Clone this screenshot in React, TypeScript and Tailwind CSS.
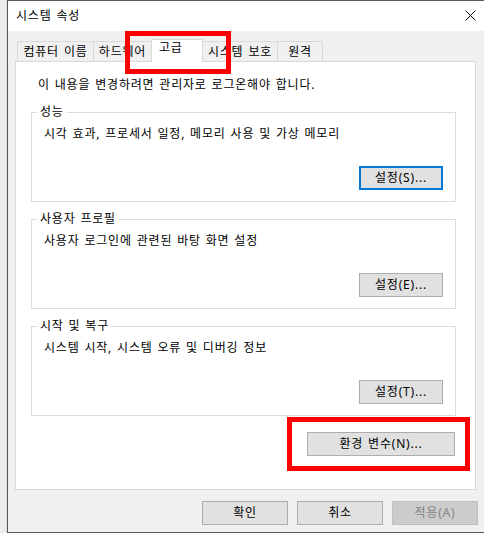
import React from 'react'

const font = "font-['Noto_Sans','Noto_Sans_CJK_KR',sans-serif] tracking-[0.8px] [word-spacing:1px]"

function Btn({ label, width = 'w-[84px]', focused = false, disabled = false }: { label: string; width?: string; focused?: boolean; disabled?: boolean }) {
  let cls = 'bg-[#e1e1e1] border border-[#adadad] text-black'
  if (focused) cls = 'bg-[#e1e1e1] border-2 border-[#0078d7] text-black'
  if (disabled) cls = 'bg-[#cccccc] border border-[#bfbfbf] text-[#838383]'
  return (
    <div className={`${width} h-[24px] flex items-center justify-center text-[12px] leading-[16px] ${cls}`}>
      {label}
    </div>
  )
}

function Group({ title, desc, btn, focused = false }: { title: string; desc: string; btn: string; focused?: boolean }) {
  return (
    <fieldset className="w-[425px] border border-[#dcdcdc] pl-[5px] pr-[12px] pb-[11px] flex flex-col">
      <legend className="px-[3px] text-[12px] leading-[16px]">{title}</legend>
      <p className="ml-[7px] mt-[6px] text-[12px] leading-[16px]">{desc}</p>
      <div className="self-end mt-[24px]">
        <Btn label={btn} focused={focused} />
      </div>
    </fieldset>
  )
}

const tabs = [
  { label: '컴퓨터 이름', w: 'w-[77px]' },
  { label: '하드웨어', w: 'w-[59px]' },
  { label: '고급', w: 'w-[52px]', active: true },
  { label: '시스템 보호', w: 'w-[76px]' },
  { label: '원격', w: 'w-[46px]' },
]

export default function App() {
  return (
    <div className={`relative w-[484px] h-[533px] flex overflow-hidden bg-[#ececec] text-black ${font}`}>
      {/* desktop behind the dialog */}
      <div className="w-[7px] shrink-0 bg-[#ececec] border-r border-[#dedede]" />

      {/* dialog window */}
      <div className="flex-1 flex flex-col border-l border-t border-b border-[#5a5a5a] bg-[#f0f0f0]">
        <div className="h-[30px] shrink-0 bg-white flex items-center justify-between pl-[8px] pr-[8px]">
          <span className="text-[12px] leading-[16px]">시스템 속성</span>
          <svg width="11" height="11" viewBox="0 0 11 11" className="mb-[1px]">
            <path d="M0.5 0.5 L10.5 10.5 M10.5 0.5 L0.5 10.5" stroke="#000" strokeWidth="1" />
          </svg>
        </div>

        <div className="flex-1 flex flex-col pt-[8px]">
          <div className="flex items-end pl-[9px] h-[22px]">
            {tabs.map((t, i) =>
              t.active ? (
                <div
                  key={t.label}
                  className={`${t.w} ${i > 0 ? '-ml-px' : ''} relative z-10 h-[23px] -mb-px bg-white border-l border-t border-r border-[#d9d9d9] flex items-center pl-[7px] pb-[7px] text-[12px] leading-[16px]`}
                >
                  {t.label}
                </div>
              ) : (
                <div
                  key={t.label}
                  className={`${t.w} ${i > 0 ? '-ml-px' : ''} h-[20px] bg-[#f0f0f0] border-l border-t border-r border-[#d9d9d9] flex items-center justify-center text-[12px] leading-[16px]`}
                >
                  {t.label}
                </div>
              ),
            )}
          </div>

          <div className="ml-[7px] w-[461px] h-[429px] bg-white border border-[#d9d9d9] pt-[15px] pl-[15px] pr-[19px] pb-[33px] flex flex-col">
            <p className="ml-[7px] text-[12px] leading-[16px]">이 내용을 변경하려면 관리자로 로그온해야 합니다.</p>
            <div className="mt-[11px] flex flex-col gap-[9px]">
              <Group title="성능" desc="시각 효과, 프로세서 일정, 메모리 사용 및 가상 메모리" btn="설정(S)..." focused />
              <Group title="사용자 프로필" desc="사용자 로그인에 관련된 바탕 화면 설정" btn="설정(E)..." />
              <Group title="시작 및 복구" desc="시스템 시작, 시스템 오류 및 디버깅 정보" btn="설정(T)..." />
            </div>
            <div className="self-end mr-[1px] mt-[16px]">
              <Btn label="환경 변수(N)..." width="w-[148px]" />
            </div>
          </div>

          <div className="mt-[11px] flex justify-end gap-[9px] pr-[6px]">
            <Btn label="확인" width="w-[86px]" />
            <Btn label="취소" width="w-[86px]" />
            <Btn label="적용(A)" width="w-[86px]" disabled />
          </div>
        </div>
      </div>

      {/* red annotation boxes */}
      <div className="absolute left-[125px] top-[31px] w-[106px] h-[43px] border-[5px] border-[#ff0000] z-20" />
      <div className="absolute left-[287px] top-[417px] w-[183px] h-[54px] border-[5px] border-[#ff0000] z-20" />
    </div>
  )
}
